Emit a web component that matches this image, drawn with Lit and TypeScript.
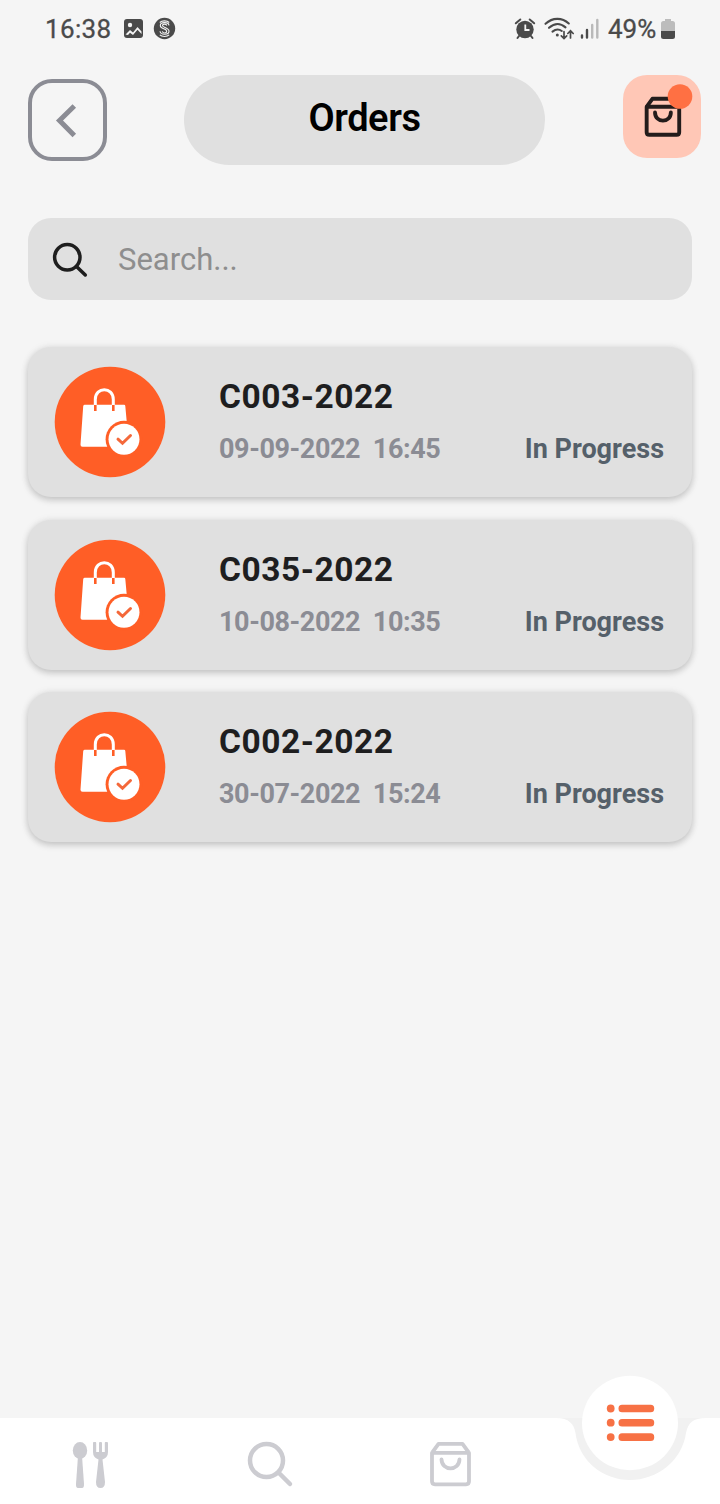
import { LitElement, html, css, svg } from "lit";
import { customElement, property } from "lit/decorators.js";

interface Order {
  code: string;
  date: string;
  time: string;
  status: string;
}

const orders: Order[] = [
  { code: "C003-2022", date: "09-09-2022", time: "16:45", status: "In Progress" },
  { code: "C035-2022", date: "10-08-2022", time: "10:35", status: "In Progress" },
  { code: "C002-2022", date: "30-07-2022", time: "15:24", status: "In Progress" },
];

const boxShape = svg`
  <path d="M2 11V39.5Q2 42.5 5 42.5H36Q39 42.5 39 39.5V11Z"/>
  <path d="M2.3 10.5L8.5 2H32.5L38.7 10.5"/>
  <path d="M11.5 17.5C12 29.5 29 29.5 29.5 17.5" stroke-linecap="round"/>`;

@customElement("status-bar")
export class StatusBar extends LitElement {
  static styles = css`
    :host {
      display: flex;
      align-items: center;
      height: 58px;
      padding: 0 44px 0 45px;
      color: #4a4a4a;
      font-size: 26px;
      line-height: 58px;
      -webkit-text-stroke: 0.3px #4a4a4a;
    }
    .time { width: 78px; letter-spacing: 0.35px; }
    .left { display: block; }
    .right { display: block; margin-left: auto; }
    .percent { width: 52px; padding-left: 6px; box-sizing: border-box; white-space: nowrap; }
    .battery { display: block; }
  `;
  render() {
    return html`
      <span class="time">16:38</span>
      <svg class="left" width="54" height="24" viewBox="123 17 54 24">
        <rect x="124" y="19" width="19" height="19" rx="3" fill="#4a4a4a" />
        <circle cx="130" cy="25" r="2.200" fill="#f5f5f5" />
        <path d="M125.500 34.500L130 30L133 32.500L137.500 27L141.500 31.500V34L137.500 29.800L133 35L130 32.800L128 35Z" fill="#f5f5f5" />
        <circle cx="164.500" cy="28.500" r="10.700" fill="#4a4a4a" />
        <g fill="none" stroke="#f5f5f5" stroke-width="1.100">
          <path d="M169 25.300C168.500 21.700 160.300 21.700 160.300 25.500C160.300 29.500 166.700 28 166.700 31.300C166.700 33.500 163 33.500 162.300 31.300" />
          <path d="M166.800 25.500C166.300 23.600 162.500 23.600 162.500 25.500C162.500 27.800 169 27.300 169 31.300C169 35.300 160.500 35.300 160 31.300" />
          <path d="M159.800 22.500C162 20.300 167 20.300 169.200 22.500M159.800 34.800C162 37 167 37 169.200 34.800" />
        </g>
      </svg>
      <svg class="right" width="88" height="26" viewBox="514 16 88 26">
        <circle cx="525" cy="29.500" r="8.700" fill="#4a4a4a" />
        <path d="M515.800 23.300L520.300 19.500M534.200 23.300L529.700 19.500M519 36L517.500 38M531 36L532.500 38" stroke="#4a4a4a" stroke-width="2" stroke-linecap="round" />
        <path d="M525.300 24.500V30H529.500" fill="none" stroke="#f5f5f5" stroke-width="1.800" />
        <g fill="none" stroke="#4a4a4a" stroke-width="2.100" stroke-linecap="round">
          <path d="M545.500 23.800C552.500 17.300 562 17.300 568.800 23.500M549 27.800C554.500 23 560.500 23 565.500 27.400M552.500 31.600C555.800 29 559 29 561.800 31" />
          <path d="M564 31.500V38M561.300 35.800L564 38.600L566.700 35.800M570.500 38V31M567.800 33.500L570.500 30.800L573.200 33.500" stroke-width="1.700" />
        </g>
        <circle cx="557.300" cy="35" r="1.500" fill="#4a4a4a" />
        <path d="M582 35.500V37.500M587 30V37.500" stroke="#4a4a4a" stroke-width="2.400" stroke-linecap="round" />
        <path d="M592.200 25V37.500M597.300 20V37.500" stroke="#b9b9b9" stroke-width="2.400" stroke-linecap="round" />
      </svg>
      <span class="percent">49%</span>
      <svg class="battery" width="22" height="24" viewBox="654 17 22 24">
        <path d="M661 31V23.500Q661 21 663.500 21H665V19H671V21H672.500Q675 21 675 23.500V31Z" fill="#bcbcbc" />
        <path d="M661 31H675V36.500Q675 39 672.500 39H663.500Q661 39 661 36.500Z" fill="#4a4a4a" />
      </svg>
    `;
  }
}

@customElement("order-card")
export class OrderCard extends LitElement {
  @property({ attribute: false }) order!: Order;

  static styles = css`
    :host {
      display: flex;
      box-sizing: border-box;
      height: 150px;
      padding: 19px 28px 0 26px;
      border-radius: 23px;
      background: #e0e0e0;
      box-shadow: 0 3px 7px rgba(0, 0, 0, 0.18), 0 0 8px rgba(0, 0, 0, 0.07);
    }
    .badge { display: block; flex: none; }
    .info { flex: 1; padding: 10px 0 0 53px; }
    .code {
      color: #1e1e1f;
      font-size: 33.500px;
      font-weight: 700;
      line-height: 42px;
      letter-spacing: 0.55px;
    }
    .row {
      display: flex;
      justify-content: space-between;
      margin-top: 14px;
      font-size: 27px;
      font-weight: 700;
      line-height: 34px;
      white-space: pre;
    }
    .when { color: #8b8c94; letter-spacing: -0.4px; }
    .status { color: #55606a; }
  `;
  render() {
    const o = this.order;
    return html`
      <svg class="badge" width="112" height="112" viewBox="54 366 112 112">
        <circle cx="110" cy="422" r="55.300" fill="#ff5e26" />
        <path d="M84.500 404.800H124Q125.200 404.800 125.300 406L129 446.800H82.500Q80.300 446.800 80.500 444.500L83.200 406.300Q83.300 404.800 84.500 404.800Z" fill="#fff" />
        <path d="M95.300 405V399.500C95.300 386.500 113.300 386.500 113.300 399.500V405" fill="none" stroke="#fff" stroke-width="3" />
        <path d="M95.300 405V411M113.300 405V411" stroke="#ff5e26" stroke-width="2.600" />
        <circle cx="124" cy="439.200" r="18.400" fill="#ff5e26" />
        <circle cx="124" cy="439.200" r="15.500" fill="#fff" />
        <path d="M118 439.200L122.500 443.300L130.500 435.500" fill="none" stroke="#f4683a" stroke-width="3" stroke-linecap="round" />
      </svg>
      <div class="info">
        <div class="code">${o.code}</div>
        <div class="row">
          <span class="when">${o.date}  ${o.time}</span>
          <span class="status">${o.status}</span>
        </div>
      </div>
    `;
  }
}

@customElement("bottom-nav")
export class BottomNav extends LitElement {
  static styles = css`
    :host {
      display: grid;
      grid-template-columns: repeat(4, 180px);
      height: 86px;
      background: #fff;
    }
    .item { display: flex; justify-content: center; padding-top: 23px; }
    .item svg { display: block; }
    .active { margin-top: -44px; }
    .active svg { display: block; }
  `;
  render() {
    return html`
      <div class="item">
        <svg width="44" height="48" viewBox="68 1441 44 48" fill="#ccccd1">
          <ellipse cx="80" cy="1450.500" rx="7.200" ry="8.500" />
          <path d="M78 1456H82L84 1484Q84.200 1488 82 1488H78Q75.800 1488 76 1484Z" />
          <path d="M93 1442.500Q93 1442 94 1442H95.500Q96.200 1442 96.200 1443V1452H99V1443Q99 1442 100 1442H101Q102 1442 102 1443V1452H104.800V1443Q104.800 1442 105.500 1442H107Q108 1442 108 1443V1452Q108 1457.500 102.500 1459.500L105 1482Q105 1488 100.500 1488Q96 1488 96 1482L98.500 1459.500Q93 1457.500 93 1452Z" />
        </svg>
      </div>
      <div class="item">
        <svg width="48" height="48" viewBox="246 1441 48 48" fill="none" stroke="#ccccd1">
          <circle cx="266.500" cy="1460.500" r="16.500" stroke-width="4.500" />
          <path d="M278.500 1472.500L290 1484" stroke-width="4.500" stroke-linecap="round" />
        </svg>
      </div>
      <div class="item">
        <svg width="44" height="48" viewBox="-2 0.500 44 48" fill="none" stroke="#ccccd1" stroke-width="3.800" stroke-linejoin="round">
          <g transform="translate(0 1.300)">${boxShape}</g>
        </svg>
      </div>
      <div class="active">
        <svg width="180" height="108" viewBox="540 1374 180 108">
          <path d="M556 1418C569 1418 574 1424 575.500 1433C579 1461 603 1480 630 1480C657 1480 682 1461 686 1433C688 1423 693 1418 706 1418Z" fill="#f1f1f1" />
          <ellipse cx="630" cy="1423" rx="48" ry="47.200" fill="#fff" />
          <g fill="#f77145">
            <circle cx="610.700" cy="1408.500" r="3.900" />
            <circle cx="610.700" cy="1422.700" r="3.900" />
            <circle cx="610.700" cy="1437.100" r="3.900" />
            <rect x="618.500" y="1404.700" width="35.700" height="7.600" rx="3.500" />
            <rect x="618.500" y="1418.900" width="35.700" height="7.600" rx="3.500" />
            <rect x="618.500" y="1433.300" width="35.700" height="7.600" rx="3.500" />
          </g>
        </svg>
      </div>
    `;
  }
}

@customElement("app-root")
export class AppRoot extends LitElement {
  static styles = css`
    :host {
      display: flex;
      flex-direction: column;
      width: 720px;
      height: 1504px;
      overflow: hidden;
      background: #f5f5f5;
      font-family: Roboto, "Liberation Sans", sans-serif;
    }
    .header {
      display: flex;
      align-items: flex-start;
      height: 90px;
      margin-top: 17px;
      padding: 0 19px 0 28px;
    }
    .back {
      display: flex;
      box-sizing: border-box;
      width: 79px;
      height: 82px;
      margin-top: 4px;
      border: 4px solid #8b8c94;
      border-radius: 24px;
    }
    .title {
      width: 361px;
      height: 90px;
      margin-left: 77px;
      border-radius: 45px;
      background: #e0e0e0;
      color: #000;
      font-size: 38px;
      font-weight: 600;
      line-height: 87px;
      text-align: center;
      letter-spacing: -0.4px;
    }
    .cart {
      width: 78px;
      height: 83px;
      margin-left: auto;
      border-radius: 24px;
      background: #ffc7b6;
    }
    .back svg, .cart svg, .search svg { display: block; }
    .search {
      display: flex;
      align-items: center;
      height: 82px;
      margin: 53px 28px 0;
      padding-left: 23px;
      box-sizing: border-box;
      border-radius: 23px;
      background: #e0e0e0;
      color: #8e8e8e;
      font-size: 31px;
    }
    .placeholder { padding-left: 29px; }
    .list {
      display: flex;
      flex-direction: column;
      flex: 1;
      gap: 22.500px;
      margin: 47px 28px 0;
    }
  `;
  render() {
    return html`
      <status-bar></status-bar>
      <div class="header">
        <div class="back">
          <svg width="71" height="74" viewBox="32 83 71 74">
            <path d="M74.300 106L59.500 120.500L74.300 135.500" fill="none" stroke="#8b8c94" stroke-width="5" />
          </svg>
        </div>
        <div class="title">Orders</div>
        <div class="cart">
          <svg width="78" height="83" viewBox="623 75 78 83">
            <g transform="translate(644.900 97) scale(0.880 0.890)" fill="none" stroke="#231c1b" stroke-width="4.400" stroke-linejoin="round">
              ${boxShape}
            </g>
            <circle cx="680" cy="96.500" r="12.300" fill="#ff7043" />
          </svg>
        </div>
      </div>
      <div class="search">
        <svg width="38" height="38" viewBox="51 240 38 38" fill="none" stroke="#1e1e1e" stroke-width="3.500">
          <circle cx="67.300" cy="257.300" r="12.700" />
          <path d="M76.500 266.500L85.300 275" stroke-linecap="round" />
        </svg>
        <span class="placeholder">Search...</span>
      </div>
      <div class="list">
        ${orders.map((o) => html`<order-card .order=${o}></order-card>`)}
      </div>
      <bottom-nav></bottom-nav>
    `;
  }
}
